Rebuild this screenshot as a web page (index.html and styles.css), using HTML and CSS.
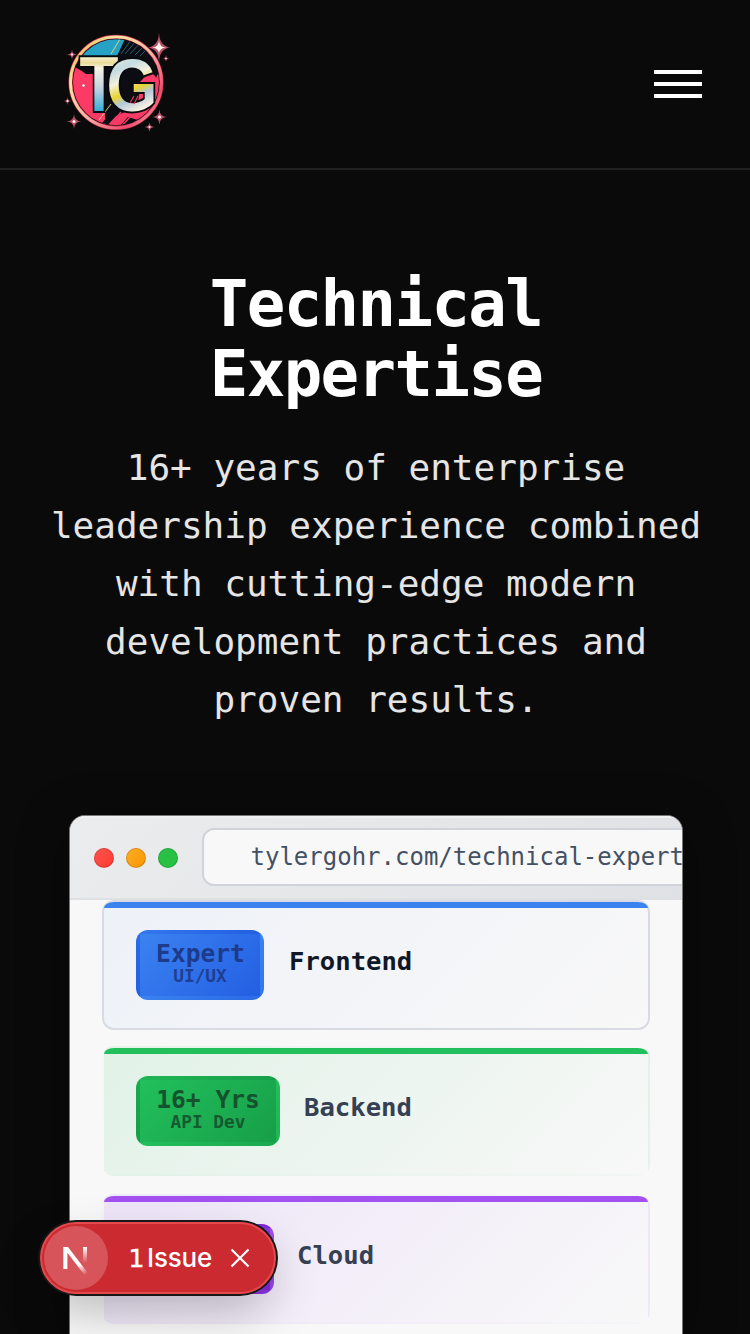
FILE: index.html
```html
<!DOCTYPE html>
<html lang="en">
<head>
<meta charset="utf-8">
<title>Technical Expertise</title>
<link rel="stylesheet" href="styles.css">
</head>
<body>
<header class="site-header">
  <svg class="logo" viewBox="0 0 112 112" aria-label="TG">
    <defs>
      <linearGradient id="ring" x1="0" y1="0" x2="1" y2="1">
        <stop offset="0" stop-color="#e0a63e"/><stop offset=".25" stop-color="#f8e7a0"/><stop offset=".55" stop-color="#efb4a8"/><stop offset=".8" stop-color="#f04a6c"/><stop offset="1" stop-color="#f5dcc8"/>
      </linearGradient>
      <linearGradient id="tee" x1="0" y1="28" x2="0" y2="84" gradientUnits="userSpaceOnUse">
        <stop offset="0" stop-color="#fdf6dc"/><stop offset=".12" stop-color="#eadb98"/><stop offset=".22" stop-color="#f7f3e4"/><stop offset=".6" stop-color="#bdd1e0"/><stop offset=".95" stop-color="#3fb0d4"/>
      </linearGradient>
      <linearGradient id="gee" x1="50" y1="28" x2="76" y2="84" gradientUnits="userSpaceOnUse">
        <stop offset="0" stop-color="#f4f0dc"/><stop offset=".25" stop-color="#c3dbe2"/><stop offset=".45" stop-color="#f4f0dc"/><stop offset=".65" stop-color="#e9d430"/><stop offset=".78" stop-color="#b4c8db"/><stop offset="1" stop-color="#fbf5e2"/>
      </linearGradient>
      <clipPath id="disc"><circle cx="56" cy="54.300" r="43"/></clipPath>
      <path id="spark" d="M0-10Q.4-.4 10 0Q.4.4 0 10Q-.4.4-10 0Q-.4-.4 0-10Z"/>
    </defs>
    <g clip-path="url(#disc)">
      <rect width="112" height="112" fill="#0b0d12"/>
      <path d="M10 0H70L57 28H18L10 38Z" fill="#25a2c6"/>
      <path d="M8 38Q16 38 26 46H45V91L53 104H8Z" fill="#fb3b66"/>
      <path d="M80 54Q92 40 96 50Q100 39 108 44V88L84 94L68 89L57 101H44L56 88L78 78Z" fill="#fb3b66"/>
      <path d="M51 26 60 11M42 100 56 82M39 92 51 76" stroke="#d9d082" stroke-width="1"/>
      <path d="M61 26 71 12M65 26 76 13M70 26 80 15M75 27 85 17M80 28 88 20" stroke="#1c5f74" stroke-width="1"/>
      <path d="M46 103 61 84M51 104 67 86M56 104 71 88" stroke="#f13a60" stroke-width="1.5"/>
      <path d="M42 99 58 79M78 100 100 76" stroke="#0b0d12" stroke-width="5"/>
    </g>
    <circle cx="56" cy="54.300" r="45.5" fill="none" stroke="#c62e52" stroke-width="4"/>
    <circle cx="56" cy="54.300" r="45.5" fill="none" stroke="url(#ring)" stroke-width="2.8"/>
    <g class="logo-letters">
      <text x="19.500" y="83" textLength="39" lengthAdjust="spacingAndGlyphs" fill="url(#tee)" font-size="77">T</text>
      <text x="46.500" y="83" textLength="51" lengthAdjust="spacingAndGlyphs" fill="url(#gee)" font-size="75">G</text>
    </g>
    <path d="M70 75 74 68M74 76 78 68" stroke="#e23a5e" stroke-width="1.200"/>
    <g fill="#b8506a">
      <use href="#spark" transform="translate(99 19.500) scale(1.2 1.5)"/>
      <use href="#spark" transform="translate(12 26.500) scale(.5)"/>
      <use href="#spark" transform="translate(106 30.500) scale(.35)"/>
      <use href="#spark" transform="translate(7.500 73) scale(.4)"/>
      <use href="#spark" transform="translate(14 93.500) scale(.75)"/>
      <use href="#spark" transform="translate(99.500 89) scale(.75)"/>
      <use href="#spark" transform="translate(89.500 99) scale(.5)"/>
      <use href="#spark" transform="translate(23.500 57.500) scale(.4)"/>
    </g>
    <g fill="#fff7ec">
      <use href="#spark" transform="translate(99 19.500) scale(.7)"/>
      <circle cx="99" cy="19.500" r="2.2"/><circle cx="12" cy="26.500" r="1.1"/><circle cx="106" cy="30.500" r=".7"/><circle cx="7.500" cy="73" r="1"/><circle cx="14" cy="93.500" r="1.5"/><circle cx="99.500" cy="89" r="1.5"/><circle cx="89.500" cy="99" r="1"/><circle cx="23.500" cy="57.500" r="1.3"/>
    </g>
  </svg>
  <button class="menu" aria-label="Menu"><span class="menu-line"></span><span class="menu-line"></span><span class="menu-line"></span></button>
</header>
<main class="main">
  <h1 class="title">Technical<br>Expertise</h1>
  <p class="lead">16+ years of enterprise leadership experience combined with cutting-edge modern development practices and proven results.</p>
  <section class="browser">
    <div class="toolbar">
      <span class="dot dot-red"></span><span class="dot dot-amber"></span><span class="dot dot-green"></span>
      <div class="address">tylergohr.com/technical-expertise</div>
    </div>
    <div class="cards">
      <article class="card card-blue">
        <div class="badge"><span class="badge-main">Expert</span><span class="badge-sub">UI/UX</span></div>
        <h2 class="card-title">Frontend</h2>
      </article>
      <article class="card card-green">
        <div class="badge"><span class="badge-main">16+ Yrs</span><span class="badge-sub">API Dev</span></div>
        <h2 class="card-title">Backend</h2>
      </article>
      <article class="card card-purple">
        <div class="badge"></div>
        <h2 class="card-title">Cloud</h2>
      </article>
    </div>
  </section>
</main>
<aside class="issues">
  <span class="issues-mark">
    <svg width="64" height="64" viewBox="0 0 64 64" fill="none">
      <defs>
        <linearGradient id="slant" x1="36" y1="38" x2="43" y2="48" gradientUnits="userSpaceOnUse"><stop stop-color="#fff"/><stop offset="1" stop-color="#fff" stop-opacity="0"/></linearGradient>
        <linearGradient id="stem" x1="41" y1="21" x2="41" y2="37" gradientUnits="userSpaceOnUse"><stop stop-color="#fff"/><stop offset="1" stop-color="#fff" stop-opacity="0"/></linearGradient>
      </defs>
      <path d="M19.300 43V21H24L43.500 46.500L40.500 49L23.400 26.800V43Z" fill="url(#slant)"/>
      <path d="M39 21H43V38H39Z" fill="url(#stem)"/>
    </svg>
  </span>
  <span class="issues-text"><span class="issues-count">1</span>Issue</span>
  <svg class="issues-close" width="20" height="20" viewBox="0 0 20 20"><path d="M1.500 1.500 18.500 18.500M18.500 1.500 1.500 18.500" stroke="#fff" stroke-width="2.200"/></svg>
</aside>
</body>
</html>
```
FILE: styles.css
```css
* { box-sizing: border-box; }
body {
  margin: 0;
  height: 1334px;
  overflow: hidden;
  background: #0a0a0a;
  color: #fff;
  font-family: "DejaVu Sans Mono", monospace;
}
.site-header {
  display: flex;
  align-items: center;
  justify-content: space-between;
  height: 170px;
  padding: 0 48px 0 60px;
  border-bottom: 2px solid #222;
}
.logo { width: 112px; height: 112px; overflow: visible; }
.logo-letters {
  font-family: "Liberation Sans", sans-serif;
  font-weight: 700;
  stroke: #080a10;
  stroke-width: 4px;
  paint-order: stroke;
}
.menu {
  display: flex;
  flex-direction: column;
  gap: 8px;
  width: 48px;
  padding: 0;
  border: 0;
  background: none;
}
.menu-line { height: 4px; background: #fff; }
.main { height: 1164px; padding-top: 99px; overflow: hidden; }
.title {
  margin: 0;
  padding-left: 2px;
  font-size: 64px;
  line-height: 70.4px;
  letter-spacing: -1.6px;
  text-align: center;
}
.lead {
  width: 654px;
  margin: 29px auto 0 49px;
  color: #e5e5e5;
  font-size: 36px;
  line-height: 58px;
  text-align: center;
}
.browser {
  width: 614px;
  height: 519px;
  margin: 86px auto 0 69px;
  overflow: hidden;
  border: 1px solid #777;
  border-bottom: 0;
  border-radius: 16px 16px 0 0;
  background: #f8f8f8;
  box-shadow: 0 10px 50px rgba(0, 0, 0, .4);
}
.toolbar {
  display: flex;
  align-items: center;
  gap: 12px;
  height: 84px;
  padding-left: 24px;
  border-top: 2px solid #f0f0f1;
  border-bottom: 2px solid #dfe0e3;
  background: linear-gradient(135deg, #ebeced, #e0e1e4);
}
.dot { flex: none; width: 20px; height: 20px; border: 1px solid rgba(0, 0, 0, .14); border-radius: 50%; }
.dot-red { background: linear-gradient(135deg, #ff544d, #fa3b32); }
.dot-amber { background: linear-gradient(135deg, #fbae27, #fa9500); }
.dot-green { background: #28c146; }
.address {
  flex: none;
  width: 560px;
  height: 58px;
  margin: -2px 0 0 12px;
  padding-left: 46.500px;
  border: 2px solid #d1d3da;
  border-radius: 12px;
  background: #f8f8f8;
  color: #445063;
  font-size: 24px;
  line-height: 54px;
  white-space: nowrap;
}
.cards { padding: 0 32px; }
.card {
  display: flex;
  gap: 24px;
  height: 130px;
  margin-bottom: 16px;
  padding: 28px 32px;
  border: 2px solid transparent;
  border-radius: 12px;
}
.card::before {
  content: "";
  flex: none;
  align-self: flex-start;
  width: 544px;
  height: 6px;
  margin: -28px -536px 0 -32px;
  border-radius: 10px 10px 0 0 / 6px 6px 0 0;
  background: var(--accent);
}
.card-blue { --accent: #3b82f1; --deep: #235fe2; border-color: #d8dbe1; background: linear-gradient(135deg, #edf2f8, #f3f4f8 45%, #f8f8f8); color: #101828; }
.card-green { --accent: #22c05c; --deep: #179e48; margin-bottom: 18px; background: linear-gradient(135deg, #e1f2e7, #f8f8f8); color: #364052; }
.card-purple { --accent: #a351f1; --deep: #8229db; background: linear-gradient(135deg, #eee5f9, #f8f8f8); color: #364052; }
.badge {
  display: flex;
  flex-direction: column;
  align-items: center;
  height: 70px;
  padding: 8px 16px;
  border: 4px solid transparent;
  border-radius: 12px;
  background: linear-gradient(135deg, var(--accent), var(--deep));
  font-weight: 700;
}
.card-blue .badge { width: 128px; color: #1e3a8a; }
.card-green .badge { width: 144px; color: #14532d; }
.card-purple .badge { width: 138px; }
.badge-main { font-size: 24.600px; line-height: 24px; white-space: nowrap; }
.card-blue .badge-main { padding-left: 1px; }
.badge-sub { font-size: 17.800px; line-height: 20px; opacity: .9; white-space: nowrap; }
.card-title { margin: 14px 0 0; font-size: 25.600px; line-height: 34px; }
.card-blue .card-title { margin-left: 1px; }
.card-purple .card-title { margin-left: -1px; }
.issues {
  position: absolute;
  left: 40px;
  top: 1222px;
  display: flex;
  align-items: center;
  width: 236px;
  height: 72px;
  padding-left: 2px;
  border: 2px solid #e5484d;
  border-radius: 36px;
  background: #ca2a30;
  box-shadow: 0 0 0 2px #171717, 0 20px 48px -4px rgba(0, 0, 0, .26);
}
.issues-mark { flex: none; width: 64px; height: 64px; border-radius: 50%; background: #d6545a; }
.issues-text { display: flex; align-items: baseline; gap: 5px; width: 84px; margin-left: 22px; font: 500 26px/32px Inter, sans-serif; letter-spacing: -.2px; white-space: nowrap; }
.issues-count { font-family: "DejaVu Sans", sans-serif; font-size: 25px; width: 12px; text-indent: -1.500px; -webkit-text-stroke: .5px #fff; }
.issues-close { margin-left: 16px; }
```
